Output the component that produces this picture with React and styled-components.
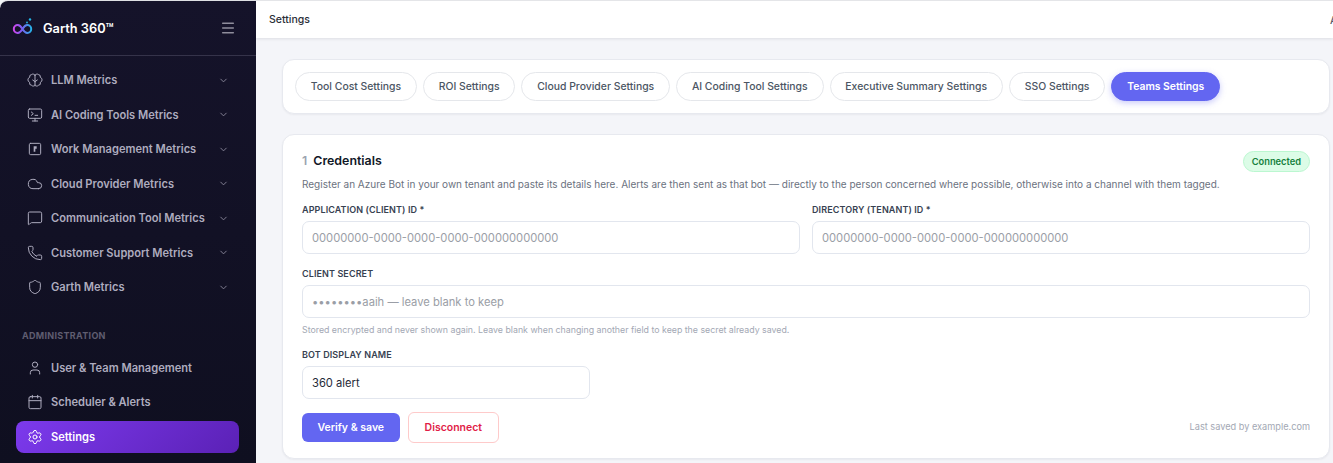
import React from "react";
import styled, { createGlobalStyle } from "styled-components";
import {
	Calendar,
	ChevronDown,
	Cloud,
	Menu,
	MessageSquare,
	Phone,
	Settings,
	Shield,
	User,
} from "lucide-react";

const GlobalStyle = createGlobalStyle`
	html, body {
		margin: 0;
		padding: 0;
		height: 100%;
		background: #f4f5f9;
		font-family: "Inter", "Liberation Sans", sans-serif;
		overflow: hidden;
	}
	* {
		box-sizing: border-box;
	}
`;

const Shell = styled.div`
	display: flex;
	width: 1333px;
	height: 463px;
	overflow: hidden;
	background: #f4f5f9;
`;

const Sidebar = styled.aside`
	width: 256px;
	flex-shrink: 0;
	display: flex;
	flex-direction: column;
	background: linear-gradient(180deg, #15132a 0%, #0f0f20 100%);
	border-top-left-radius: 8px;
	border-top: 1px solid #dfe0e4;
`;

const Brand = styled.div`
	height: 55px;
	flex-shrink: 0;
	display: flex;
	align-items: center;
	padding: 0 20px 0 12px;
	border-bottom: 1px solid #35334a;
`;

const BrandName = styled.div`
	margin-left: 9px;
	flex: 1;
	font-size: 12.8px;
	font-weight: 600;
	color: #ffffff;
`;

const Nav = styled.nav`
	display: flex;
	flex-direction: column;
	padding: 8px 17px 0 16px;
`;

const NavItem = styled.div`
	height: 32px;
	margin-bottom: 2.5px;
	padding: 0 10px 0 11px;
	display: flex;
	align-items: center;
	border-radius: 8px;
	font-size: 11.1px;
	font-weight: 600;
	color: ${(props) => (props.$active ? "#ffffff" : "#aeacbf")};
	background: ${(props) =>
		props.$active ? "linear-gradient(135deg, #7c3aed 0%, #5b21b6 100%)" : "transparent"};

	svg {
		flex-shrink: 0;
	}
`;

const NavLabel = styled.span`
	margin-left: 8px;
	flex: 1;
	white-space: nowrap;
`;

const SectionLabel = styled.div`
	margin: 24px 0 11px;
	padding-left: 6px;
	font-size: 9px;
	font-weight: 700;
	letter-spacing: 0.3px;
	color: #5f5d70;
`;

const Main = styled.main`
	flex: 1;
	min-width: 0;
	display: flex;
	flex-direction: column;
`;

const TopBar = styled.header`
	height: 38px;
	flex-shrink: 0;
	display: flex;
	align-items: center;
	justify-content: space-between;
	padding: 0 0 0 13px;
	background: #ffffff;
	border-top: 1px solid #e4e5e8;
	box-shadow: 0 1px 3px rgba(15, 23, 42, 0.1);
	font-size: 10.5px;
	font-weight: 500;
	color: #2a2e38;
	overflow: hidden;
`;

const TopBarEdge = styled.span`
	margin-right: -4px;
	font-size: 10px;
	color: #555a66;
`;

const Content = styled.div`
	display: flex;
	flex-direction: column;
	gap: 20px;
	padding: 21px 3px 0 26px;
`;

const Card = styled.section`
	background: #ffffff;
	border: 1px solid #e7e9ef;
	border-radius: 12px;
	box-shadow: 0 1px 2px rgba(15, 23, 42, 0.05);
`;

const TabRow = styled(Card)`
	height: 55px;
	display: flex;
	align-items: center;
	gap: 6px;
	padding: 0 12px;
`;

const Tab = styled.div`
	height: 29px;
	padding: 0 14.85px;
	display: flex;
	align-items: center;
	border-radius: 100px;
	border: 1px solid ${(props) => (props.$active ? "#6366f1" : "#e5e7eb")};
	background: ${(props) => (props.$active ? "#6366f1" : "#ffffff")};
	box-shadow: ${(props) => (props.$active ? "0 2px 6px rgba(99, 102, 241, 0.35)" : "none")};
	font-size: 10.4px;
	font-weight: ${(props) => (props.$active ? 600 : 500)};
	color: ${(props) => (props.$active ? "#ffffff" : "#4b5563")};
	white-space: nowrap;
`;

const FormCard = styled(Card)`
	height: 325px;
	padding: 16px 19px 0;
`;

const TitleRow = styled.div`
	height: 19px;
	display: flex;
	align-items: center;
	justify-content: space-between;
`;

const Title = styled.h2`
	margin: 0;
	font-size: 12.4px;
	font-weight: 600;
	color: #111827;
`;

const StepNumber = styled.span`
	margin-right: 6px;
	color: #9ca3af;
`;

const Badge = styled.span`
	margin-top: 1px;
	padding: 4px 8px;
	border-radius: 100px;
	border: 1px solid #bbf7d0;
	background: #dcfce7;
	font-size: 9.3px;
	font-weight: 600;
	line-height: 11px;
	color: #15803d;
`;

const Description = styled.p`
	margin: 7px 0 0;
	font-size: 10px;
	line-height: 14px;
	color: #6b7280;
	white-space: nowrap;
`;

const FieldGrid = styled.div`
	display: grid;
	grid-template-columns: 1fr 1fr;
	gap: 12px;
	margin-top: 13px;
`;

const Field = styled.div`
	display: flex;
	flex-direction: column;
	margin-top: ${(props) => props.$top || 0}px;
	width: ${(props) => props.$width || "100%"};
`;

const Label = styled.label`
	height: 12px;
	margin-bottom: 5px;
	font-size: 9px;
	font-weight: 600;
	line-height: 12px;
	letter-spacing: 0.1px;
	color: #374151;
`;

const Input = styled.input`
	width: 100%;
	height: 33px;
	padding: 0 9px;
	border: 1px solid #e2e6ee;
	border-radius: 7px;
	background: #ffffff;
	font-family: inherit;
	font-size: 11.2px;
	color: #1f2937;
	outline: none;

	&::placeholder {
		color: #9a9ea6;
		opacity: 1;
	}
`;

const Hint = styled.div`
	margin-top: 6px;
	font-size: 8.8px;
	line-height: 11px;
	color: #a3a8b4;
`;

const Actions = styled.div`
	display: flex;
	align-items: center;
	gap: 8px;
	margin-top: 13px;
`;

const Button = styled.button`
	height: ${(props) => (props.$danger ? "31px" : "29px")};
	padding: 0 ${(props) => (props.$danger ? "16px" : "15.5px")};
	border-radius: 6px;
	border: ${(props) => (props.$danger ? "1px solid #fecaca" : "none")};
	background: ${(props) => (props.$danger ? "#ffffff" : "#6366f1")};
	font-family: inherit;
	font-size: 10.5px;
	font-weight: 600;
	color: ${(props) => (props.$danger ? "#e11d48" : "#ffffff")};
`;

const SavedBy = styled.span`
	margin-left: auto;
	margin-bottom: 2px;
	font-size: 9.2px;
	color: #a3a8b4;
`;

const LogoMark = () => (
	<svg width="22" height="22" viewBox="0 0 22 22" fill="none">
		<defs>
			<linearGradient id="logoStroke" x1="1" y1="0" x2="20" y2="0" gradientUnits="userSpaceOnUse">
				<stop offset="0" stopColor="#d946ef" />
				<stop offset="0.45" stopColor="#7c5cf0" />
				<stop offset="1" stopColor="#22b8e8" />
			</linearGradient>
		</defs>
		<path
			d="M10.5 12C9 9.5 7.8 8 5.8 8a4 4 0 0 0 0 8c2 0 3.2-1.5 4.7-4s2.7-4 4.7-4a4 4 0 0 1 0 8c-2 0-3.2-1.5-4.7-4z"
			stroke="url(#logoStroke)"
			strokeWidth="2"
		/>
		<circle cx="18" cy="2.5" r="1.2" fill="#22b8e8" />
		<circle cx="15" cy="5.5" r="0.9" fill="#22b8e8" />
	</svg>
);

const lineProps = {
	viewBox: "0 0 24 24",
	fill: "none",
	stroke: "currentColor",
	strokeLinecap: "round",
	strokeLinejoin: "round",
};

const BrainIcon = ({ size, strokeWidth }) => (
	<svg width={size} height={size} strokeWidth={strokeWidth} {...lineProps}>
		<path d="M12 4v16" />
		<path d="M12 5a3.2 3.2 0 0 0-5-1.2A3.5 3.5 0 0 0 4 8a4 4 0 0 0 0 7.5A3.5 3.5 0 0 0 7 20a3.2 3.2 0 0 0 5 0" />
		<path d="M12 5a3.2 3.2 0 0 1 5-1.2A3.5 3.5 0 0 1 20 8a4 4 0 0 1 0 7.5A3.5 3.5 0 0 1 17 20a3.2 3.2 0 0 1-5 0" />
		<path d="M12 14.5l-3.5-2.5M12 14.5l3.5-2.5" />
	</svg>
);

const TerminalMonitorIcon = ({ size, strokeWidth }) => (
	<svg width={size} height={size} strokeWidth={strokeWidth} {...lineProps}>
		<rect x="2" y="3" width="20" height="14" rx="2" />
		<path d="M12 17v4M8 21h8" />
		<path d="M6.5 7.5l3 2.5-3 2.5M12 12.5h4" />
	</svg>
);

const BoardIcon = ({ size, strokeWidth }) => (
	<svg width={size} height={size} strokeWidth={strokeWidth} {...lineProps}>
		<rect x="3.5" y="3.5" width="17" height="17" rx="2" />
		<path d="M10 8h4.5v3.5h-2V16H10z" fill="currentColor" stroke="none" />
	</svg>
);

const metricItems = [
	{ label: "LLM Metrics", icon: BrainIcon },
	{ label: "AI Coding Tools Metrics", icon: TerminalMonitorIcon },
	{ label: "Work Management Metrics", icon: BoardIcon },
	{ label: "Cloud Provider Metrics", icon: Cloud },
	{ label: "Communication Tool Metrics", icon: MessageSquare },
	{ label: "Customer Support Metrics", icon: Phone },
	{ label: "Garth Metrics", icon: Shield },
];

const adminItems = [
	{ label: "User & Team Management", icon: User },
	{ label: "Scheduler & Alerts", icon: Calendar },
	{ label: "Settings", icon: Settings, active: true },
];

const tabs = [
	"Tool Cost Settings",
	"ROI Settings",
	"Cloud Provider Settings",
	"AI Coding Tool Settings",
	"Executive Summary Settings",
	"SSO Settings",
	"Teams Settings",
];

const App = () => (
	<Shell>
		<GlobalStyle />
		<Sidebar>
			<Brand>
				<LogoMark />
				<BrandName>Garth 360™</BrandName>
				<Menu size={16} strokeWidth={2.25} color="#8f8d9c" />
			</Brand>
			<Nav>
				{metricItems.map(({ label, icon: Icon }) => (
					<NavItem key={label}>
						<Icon size={16} strokeWidth={1.5} />
						<NavLabel>{label}</NavLabel>
						<ChevronDown size={11} color="#8a889a" />
					</NavItem>
				))}
				<SectionLabel>ADMINISTRATION</SectionLabel>
				{adminItems.map(({ label, icon: Icon, active }) => (
					<NavItem key={label} $active={active}>
						<Icon size={16} strokeWidth={1.5} />
						<NavLabel>{label}</NavLabel>
					</NavItem>
				))}
			</Nav>
		</Sidebar>
		<Main>
			<TopBar>
				Settings
				<TopBarEdge>A</TopBarEdge>
			</TopBar>
			<Content>
				<TabRow as="div">
					{tabs.map((tab) => (
						<Tab key={tab} $active={tab === "Teams Settings"}>
							{tab}
						</Tab>
					))}
				</TabRow>
				<FormCard>
					<TitleRow>
						<Title>
							<StepNumber>1</StepNumber>Credentials
						</Title>
						<Badge>Connected</Badge>
					</TitleRow>
					<Description>
						Register an Azure Bot in your own tenant and paste its details here. Alerts are then sent as that bot — directly to the person concerned where possible, otherwise into a channel with them tagged.
					</Description>
					<FieldGrid>
						<Field>
							<Label>APPLICATION (CLIENT) ID *</Label>
							<Input placeholder="00000000-0000-0000-0000-000000000000" />
						</Field>
						<Field>
							<Label>DIRECTORY (TENANT) ID *</Label>
							<Input placeholder="00000000-0000-0000-0000-000000000000" />
						</Field>
					</FieldGrid>
					<Field $top={14}>
						<Label>CLIENT SECRET</Label>
						<Input placeholder="••••••••aaih — leave blank to keep" />
						<Hint>Stored encrypted and never shown again. Leave blank when changing another field to keep the secret already saved.</Hint>
					</Field>
					<Field $top={14} $width="288px">
						<Label>BOT DISPLAY NAME</Label>
						<Input defaultValue="360 alert" />
					</Field>
					<Actions>
						<Button>Verify &amp; save</Button>
						<Button $danger>Disconnect</Button>
						<SavedBy>Last saved by example.com</SavedBy>
					</Actions>
				</FormCard>
			</Content>
		</Main>
	</Shell>
);

export default App;
